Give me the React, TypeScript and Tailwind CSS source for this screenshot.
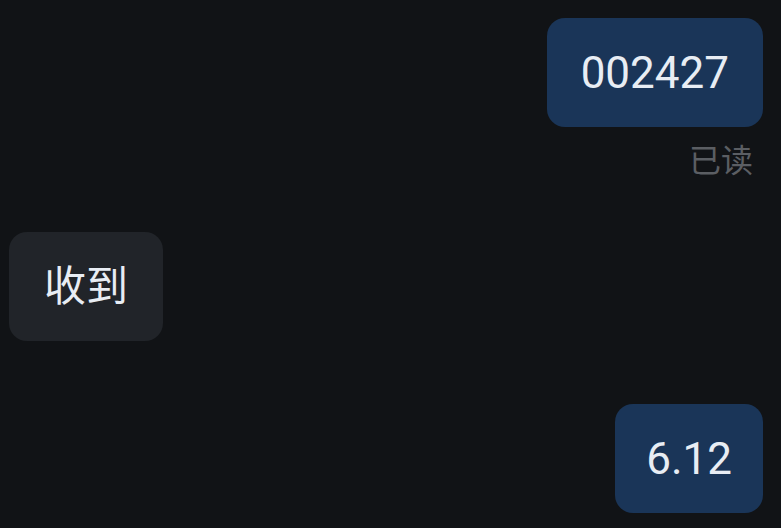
export default function App() {
  return (
    <div
      className="w-[781px] h-[528px] overflow-hidden bg-[#111316] flex flex-col pt-[18px] pl-[9px] pr-[18px]"
      style={{ fontFamily: 'Roboto, "Noto Sans CJK SC", sans-serif' }}
    >
      <div className="self-end h-[109px] px-[34px] rounded-[18px] bg-[#1a3558] text-[#e8edf4] text-[44px] flex items-center">
        002427
      </div>
      <div className="self-end mt-[15px] mr-[10px] text-[32px] leading-[38px] text-[#5b5e63]">已读</div>
      <div className="self-start mt-[52px] h-[109px] px-[35px] rounded-[18px] bg-[#212429] text-[#e8edf4] text-[42px] flex items-center">
        收到
      </div>
      <div className="self-end mt-[63px] h-[109px] px-[31px] rounded-[18px] bg-[#1a3558] text-[#e8edf4] text-[44px] flex items-center">
        6.12
      </div>
    </div>
  );
}
